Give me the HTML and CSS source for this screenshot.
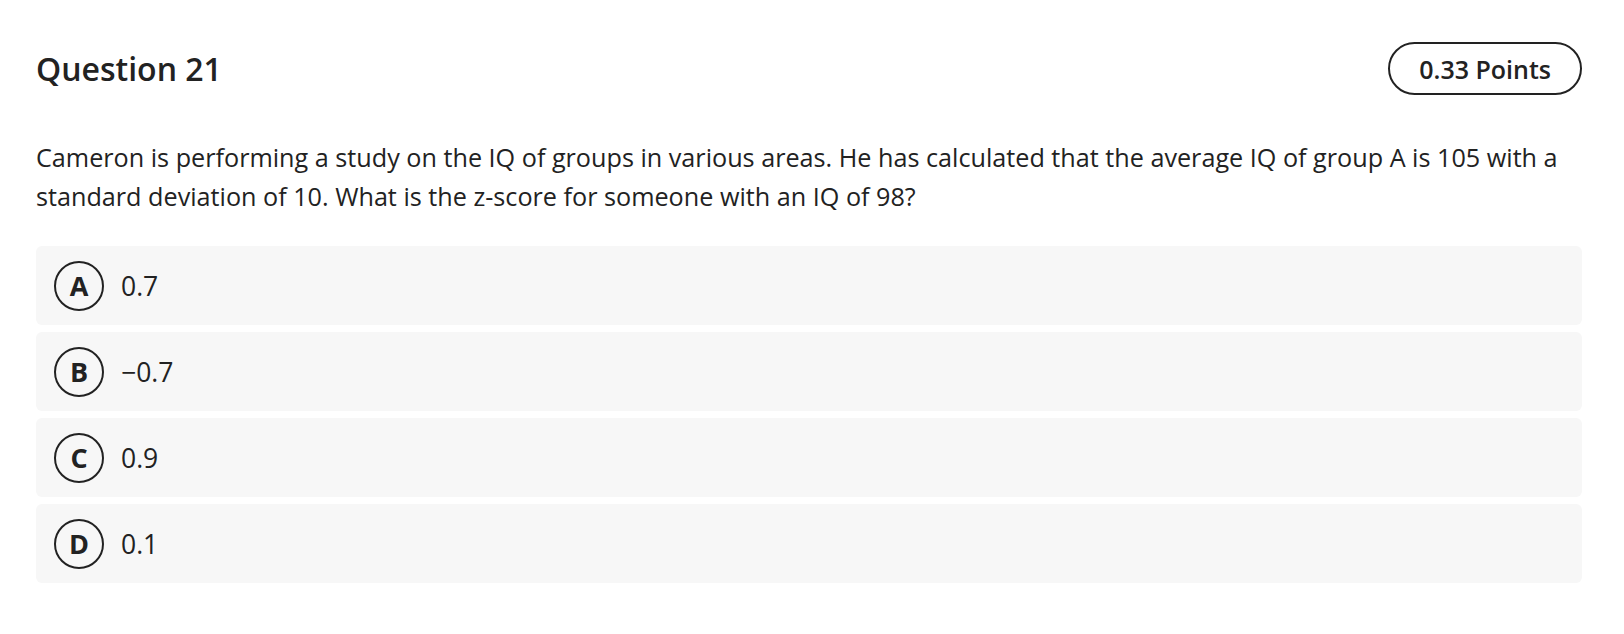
FILE: index.html
```html
<!DOCTYPE html>
<html lang="en">
<head>
<meta charset="utf-8">
<title>Question 21</title>
<link rel="stylesheet" href="styles.css">
</head>
<body>
<main class="page">
  <header class="q-header">
    <h1 class="q-title">Question 21</h1>
    <span class="q-points">0.33 Points</span>
  </header>
  <p class="q-text">Cameron is performing a study on the IQ of groups in various areas. He has calculated that the average IQ of group A is 105 with a standard deviation of 10. What is the z-score for someone with an IQ of 98?</p>
  <ul class="options">
    <li class="option"><span class="opt-letter">A</span><span class="opt-text">0.7</span></li>
    <li class="option"><span class="opt-letter">B</span><span class="opt-text">−0.7</span></li>
    <li class="option"><span class="opt-letter">C</span><span class="opt-text">0.9</span></li>
    <li class="option"><span class="opt-letter">D</span><span class="opt-text">0.1</span></li>
  </ul>
</main>
</body>
</html>
```
FILE: styles.css
```css
* { box-sizing: border-box; }
html, body { margin: 0; padding: 0; background: #fff; }
body {
  font-family: "Open Sans", "Noto Sans", sans-serif;
  color: #222;
}
.page {
  width: 1582px;
  padding: 42px 0 0 36px;
}
.q-header {
  display: flex;
  justify-content: space-between;
  align-items: center;
}
.q-title {
  margin: 0;
  font-size: 32px;
  font-weight: 600;
  line-height: 44px;
}
.q-points {
  display: inline-flex;
  align-items: center;
  height: 53px;
  padding: 0 29px 0 29px;
  border: 2px solid #222;
  border-radius: 27px;
  font-size: 25px;
  font-weight: 600;
}
.q-text {
  margin: 43px 0 0;
  font-size: 25.2px;
  line-height: 39px;
}
.options {
  list-style: none;
  margin: 30px 0 0;
  padding: 0;
  display: flex;
  flex-direction: column;
  gap: 7px;
}
.option {
  display: flex;
  align-items: center;
  gap: 17px;
  height: 79px;
  padding: 0 18px;
  background: #f7f7f7;
  border-radius: 6px;
}
.opt-letter {
  display: flex;
  align-items: center;
  justify-content: center;
  width: 50px;
  height: 50px;
  border: 2px solid #222;
  border-radius: 50%;
  font-size: 27px;
  font-weight: 700;
}
.opt-text {
  font-size: 26.5px;
}
```
